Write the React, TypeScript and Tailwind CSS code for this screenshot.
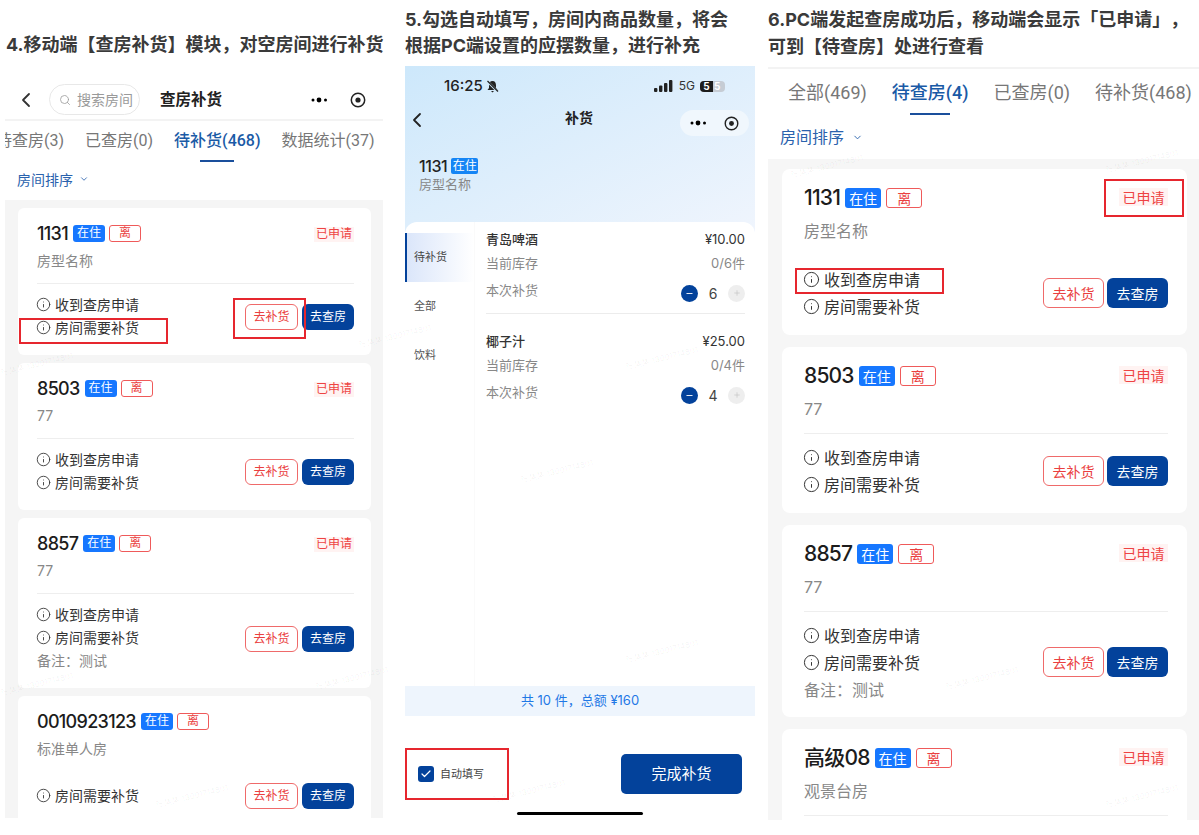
import { Info, ChevronLeft, ChevronDown, Search, Check, Minus, Plus } from "lucide-react";

const FONT = "font-['Inter','Noto_Sans_CJK_SC',sans-serif]";
const TAB_FONT = "font-['Roboto','Noto_Sans_CJK_SC',sans-serif]";

function Capsule() {
  return (
    <div className="flex items-center">
      <svg width="17" height="6" viewBox="0 0 17 6" className="text-black">
        <circle cx="2" cy="3" r="1.5" fill="currentColor" />
        <circle cx="8" cy="3" r="2.4" fill="currentColor" />
        <circle cx="14.5" cy="3" r="1.5" fill="currentColor" />
      </svg>
    </div>
  );
}

function Target({ size }: { size: number }) {
  return (
    <svg width={size} height={size} viewBox="0 0 16 16">
      <circle cx="8" cy="8" r="6.7" fill="none" stroke="#222" strokeWidth="1.5" />
      <circle cx="8" cy="8" r="2.6" fill="#222" />
    </svg>
  );
}

function Note({ text, big }: { text: string; big?: boolean }) {
  return (
    <div className={big ? "flex items-center h-[27px] gap-[4px] -ml-[1px] text-[16px] text-[#333]" : "flex items-center h-[23px] gap-[4px] -ml-[1px] text-[14px] text-[#333]"}>
      <Info size={big ? 17 : 15} strokeWidth={1.4} className="text-[#333]" />
      <span>{text}</span>
    </div>
  );
}

type CardProps = {
  no: string;
  type: string;
  notes: string[];
  remark?: boolean;
  applied?: boolean;
  divider?: boolean;
  big?: boolean;
  buttons?: boolean;
};

function Card({ no, type, notes, remark, applied = true, divider = true, big, buttons = true }: CardProps) {
  if (big) {
    return (
      <div className="bg-white rounded-[8px] pl-[22px] pr-[19px] pt-[18px] pb-[15px] shrink-0">
        <div className="flex items-center h-[22px]">
          <span className="text-[21px] font-medium text-[#1c1c1c] tracking-[-0.8px]">{no}</span>
          <span className="ml-[5px] w-[36px] h-[20px] flex items-center justify-center rounded-[3px] bg-[#1677ff] text-white text-[14px]">在住</span>
          <span className="ml-[5px] w-[36px] h-[20px] flex items-center justify-center rounded-[3px] border border-[#ef5a5a] text-[#ea4040] text-[14px]">离</span>
          {applied && (
            <span className="ml-auto mb-[2px] w-[49px] h-[18px] flex items-center justify-center bg-[#fff3f2] text-[#ee4343] text-[14px]">已申请</span>
          )}
        </div>
        <div className="mt-[10px] h-[24px] leading-[24px] text-[16px] text-[#888]">{type}</div>
        <div className={divider ? "mt-[12px] h-px bg-[#eeeeee]" : "mt-[12px] h-px bg-white"} />
        <div className="mt-[10px] flex items-center justify-between">
          <div className="flex flex-col">
            {notes.map((n) => (
              <Note key={n} text={n} big />
            ))}
            {remark && <div className="h-[26px] leading-[28px] text-[16px] text-[#888]">备注：测试</div>}
          </div>
          {buttons && (
            <div className="flex gap-[3px]">
              <span className="w-[61px] h-[30px] flex items-center justify-center rounded-[6px] border border-[#ef6a6a] text-[#ea4040] text-[14px]">去补货</span>
              <span className="w-[61px] h-[30px] flex items-center justify-center rounded-[6px] bg-[#03429b] text-white text-[14px]">去查房</span>
            </div>
          )}
        </div>
      </div>
    );
  }
  return (
    <div className="bg-white rounded-[6px] pl-[19px] pr-[17px] pt-[16px] pb-[16px] shrink-0">
      <div className="flex items-center h-[18px]">
        <span className="text-[18px] font-medium text-[#1c1c1c] tracking-[-0.7px]">{no}</span>
        <span className="ml-[5px] w-[32px] h-[17px] flex items-center justify-center rounded-[3px] bg-[#1677ff] text-white text-[12px]">在住</span>
        <span className="ml-[4px] w-[32px] h-[17px] flex items-center justify-center rounded-[3px] border border-[#ef5a5a] text-[#ea4040] text-[12px]">离</span>
        {applied && (
          <span className="ml-auto mt-[2px] w-[40px] h-[15px] flex items-center justify-center bg-[#fff3f2] text-[#ee4343] text-[12px]">已申请</span>
        )}
      </div>
      <div className="mt-[9px] h-[20px] leading-[20px] text-[14px] text-[#888]">{type}</div>
      <div className={divider ? "mt-[12px] h-px bg-[#eeeeee]" : "mt-[12px] h-px bg-white"} />
      <div className="mt-[9px] flex items-center justify-between">
        <div className="flex flex-col">
          {notes.map((n) => (
            <Note key={n} text={n} />
          ))}
          {remark && <div className="h-[23px] leading-[23px] text-[14px] text-[#888]">备注：测试</div>}
        </div>
        {buttons && (
          <div className="mt-[2px] flex gap-[4px]">
            <span className="w-[53px] h-[26px] flex items-center justify-center rounded-[6px] border border-[#ef6a6a] text-[#ea4040] text-[12px]">去补货</span>
            <span className="w-[52px] h-[26px] flex items-center justify-center rounded-[6px] bg-[#03429b] text-white text-[12px]">去查房</span>
          </div>
        )}
      </div>
    </div>
  );
}

const BOTH = ["收到查房申请", "房间需要补货"];

function ColumnOne() {
  return (
    <div className="w-[383px] pl-[5px] shrink-0">
      <h2 className="pt-[32px] h-[58px] leading-[26px] text-[18px] font-bold text-[#3a3a3a] pl-[1px] whitespace-nowrap">4.移动端【查房补货】模块，对空房间进行补货</h2>
      <div className="mt-[26px] h-[31px] flex items-center">
        <ChevronLeft size={24} strokeWidth={1.8} className="ml-[9px] text-[#333]" />
        <div className="ml-[11px] w-[91px] h-[31px] rounded-full border border-[#e8e8e8] flex items-center pl-[9px] gap-[6px] text-[14px] text-[#9a9a9a]">
          <Search size={12} strokeWidth={1.6} />
          <span>搜索房间</span>
        </div>
        <span className="ml-[20px] text-[15.5px] font-semibold text-[#222]">查房补货</span>
        <div className="ml-[89px]"><Capsule /></div>
        <div className="ml-[22px]"><Target size={16} /></div>
      </div>
      <div className="mt-[4px] h-[2px] bg-[#f3f3f3]" />
      <div className="mt-[8px] overflow-hidden">
        <div className={`${TAB_FONT} flex items-start gap-[21px] -ml-[9px] whitespace-nowrap text-[16px] text-[#777]`}>
          <span className="leading-[24px]">待查房(3)</span>
          <span className="leading-[24px]">已查房(0)</span>
          <div className="flex flex-col items-center">
            <span className="leading-[24px] font-medium text-[#1a5aa6]">待补货(468)</span>
            <div className="mt-[7px] w-[34px] h-[2px] bg-[#1a4f9c]" />
          </div>
          <span className="leading-[24px]">数据统计(37)</span>
        </div>
      </div>
      <div className="mt-[7px] h-[20px] flex items-center gap-[6px] pl-[12px] text-[14px] text-[#2a62ad]">
        <span>房间排序</span>
        <ChevronDown size={10} strokeWidth={2} />
      </div>
      <div className="mt-[11px] h-[618px] overflow-hidden bg-[#f5f5f5] pt-[8px] pl-[13px] pr-[12px] flex flex-col gap-[8px]">
        <Card no="1131" type="房型名称" notes={BOTH} />
        <Card no="8503" type="77" notes={BOTH} />
        <Card no="8857" type="77" notes={BOTH} remark />
        <Card no="0010923123" type="标准单人房" notes={["房间需要补货"]} applied={false} divider={false} />
      </div>
    </div>
  );
}

function Item({ name, price, stock, qty, divider }: { name: string; price: string; stock: string; qty: number; divider?: boolean }) {
  return (
    <div>
      <div className="flex justify-between h-[18px] leading-[18px] text-[13px] text-[#333]">
        <span className="font-medium">{name}</span>
        <span>{price}</span>
      </div>
      <div className="mt-[6px] flex justify-between h-[18px] leading-[18px] text-[13px] text-[#888]">
        <span>当前库存</span>
        <span>{stock}</span>
      </div>
      <div className="mt-[9px] flex justify-between h-[22px] text-[13px] text-[#888]">
        <span className="leading-[18px]">本次补货</span>
        <div className="mt-[3px] flex items-center h-[18px]">
          <span className="w-[17px] h-[17px] rounded-full bg-[#03429b] flex items-center justify-center">
            <Minus size={9} strokeWidth={2.4} className="text-white" />
          </span>
          <span className="w-[30px] text-center text-[14px] text-[#444]">{qty}</span>
          <span className="w-[17px] h-[17px] rounded-full bg-[#eeeeee] flex items-center justify-center">
            <Plus size={8} strokeWidth={2} className="text-[#c4c4c4]" />
          </span>
        </div>
      </div>
      <div className={divider ? "mt-[10px] mb-[18px] h-px bg-[#ececec]" : "mt-[10px] mb-[18px] h-px"} />
    </div>
  );
}

function ColumnTwo() {
  return (
    <div className="ml-[22px] w-[350px] shrink-0">
      <h2 className="pt-[7px] h-[66px] leading-[26px] text-[18px] font-bold text-[#3a3a3a] whitespace-nowrap">
        5.勾选自动填写，房间内商品数量，将会
        <br />
        根据PC端设置的应摆数量，进行补充
      </h2>
      <div className="h-[170px] bg-gradient-to-br from-[#cde8fb] to-[#f0f5fd] pt-[12px]">
        <div className="flex items-center h-[16px] pl-[39px]">
          <span className="text-[15px] font-medium text-[#222]">16:25</span>
          <svg width="13" height="13" viewBox="0 0 13 13" className="ml-[3px]">
            <path d="M6.5 1 C4 1 3 3 3 5.5 L3 8 L1.5 10 L11.5 10 L10 8 L10 5.5 C10 3 9 1 6.5 1 Z" fill="#222" />
            <path d="M5 11 L8 11 L6.5 12.6 Z" fill="#222" />
            <path d="M1.5 1.5 L11.5 11.5" stroke="#cde8fb" strokeWidth="2.4" />
            <path d="M1.5 1 L12 11.5" stroke="#222" strokeWidth="1.2" />
          </svg>
          <svg width="19" height="12" viewBox="0 0 19 12" className="ml-[155px]">
            <rect x="0" y="8" width="3.4" height="4" rx="1" fill="#222" />
            <rect x="5" y="5.5" width="3.4" height="6.5" rx="1" fill="#222" />
            <rect x="10" y="3" width="3.4" height="9" rx="1" fill="#222" />
            <rect x="15" y="0" width="3.4" height="12" rx="1" fill="#222" />
          </svg>
          <span className="ml-[6px] text-[12px] text-[#333]">5G</span>
          <span className="ml-[5px] w-[25px] h-[11px] rounded-[4px] bg-[#c6ccd4] flex overflow-hidden text-[10px] leading-[11px] font-bold">
            <span className="w-[13px] bg-[#1c1c1c] text-white text-center">5</span>
            <span className="text-white pl-[1px]">5</span>
          </span>
        </div>
        <div className="mt-[13px] flex items-start h-[28px]">
          <ChevronLeft size={24} strokeWidth={1.8} className="mt-[1px] text-[#222]" />
          <span className="ml-[136px] leading-[22px] text-[14px] font-semibold text-[#222]">补货</span>
          <div className="ml-auto mr-[6px] mt-[3px] w-[69px] h-[26px] rounded-full bg-[#f0f7fd] flex items-center pl-[10px] gap-[17px]">
            <Capsule />
            <Target size={15} />
          </div>
        </div>
        <div className="mt-[22px] pl-[14px] flex items-center h-[18px]">
          <span className="text-[16px] font-medium text-[#222] tracking-[-0.4px]">1131</span>
          <span className="ml-[4px] w-[27px] h-[16px] rounded-[2px] bg-[#1585f5] text-white text-[12px] flex items-center justify-center">在住</span>
        </div>
        <div className="pl-[14px] leading-[18px] text-[13px] text-[#888]">房型名称</div>
      </div>
      <div className="-mt-[14px] relative rounded-t-[12px] bg-white h-[464px] flex">
        <div className="w-[70px] pt-[11px] border-r border-[#fafafa] text-[11px] text-[#555]">
          <div className="h-[49px] flex items-center pl-[7px] border-l-2 border-[#03429b] bg-gradient-to-r from-[#dbe6fa] to-white text-[#444]">待补货</div>
          <div className="h-[49px] flex items-center pl-[9px]">全部</div>
          <div className="h-[49px] flex items-center pl-[9px]">饮料</div>
        </div>
        <div className="flex-1 pt-[8px] pl-[11px] pr-[10px]">
          <Item name="青岛啤酒" price="¥10.00" stock="0/6件" qty={6} divider />
          <Item name="椰子汁" price="¥25.00" stock="0/4件" qty={4} />
        </div>
      </div>
      <div className="h-[30px] bg-[#eef5fd] flex items-center justify-center text-[13px] text-[#1f78e6]">共 10 件，总额 ¥160</div>
      <div className="mt-[38px] flex items-center justify-between pl-[13px] pr-[13px]">
        <div className="flex items-center gap-[6px] text-[11px] text-[#444]">
          <span className="w-[16px] h-[16px] rounded-[3px] bg-[#03429b] flex items-center justify-center">
            <Check size={12} strokeWidth={2.4} className="text-white" />
          </span>
          <span>自动填写</span>
        </div>
        <div className="w-[121px] h-[40px] rounded-[5px] bg-[#03429b] flex items-center justify-center text-[15px] text-white">完成补货</div>
      </div>
      <div className="mt-[18px] mx-auto w-[126px] h-[3px] rounded-full bg-black" />
    </div>
  );
}

function ColumnThree() {
  return (
    <div className="ml-[13px] w-[431px] shrink-0 overflow-hidden">
      <h2 className="pt-[6px] h-[60px] leading-[27px] text-[18px] font-bold text-[#3a3a3a] whitespace-nowrap [text-spacing-trim:space-all]">
        6.PC端发起查房成功后，移动端会显示「已申请」，
        <br />
        可到【待查房】处进行查看
      </h2>
      <div className="mt-[7px] h-[2px] bg-[#f3f3f3]" />
      <div className={`${TAB_FONT} mt-[11px] pl-[20px] flex items-start gap-[25px] whitespace-nowrap text-[18px] text-[#777]`}>
        <span className="leading-[26px]">全部(469)</span>
        <div className="flex flex-col items-center">
          <span className="leading-[26px] font-medium text-[#1a5aa6]">待查房(4)</span>
          <div className="mt-[7px] w-[40px] h-[2px] bg-[#1a4f9c]" />
        </div>
        <span className="leading-[26px]">已查房(0)</span>
        <span className="leading-[26px]">待补货(468)</span>
      </div>
      <div className="mt-[11px] h-[22px] flex items-center gap-[8px] pl-[12px] text-[16px] text-[#2a62ad]">
        <span>房间排序</span>
        <ChevronDown size={11} strokeWidth={2} />
      </div>
      <div className="mt-[11px] h-[661px] overflow-hidden bg-[#f6f6f6] pt-[10px] pl-[14px] pr-[12px] flex flex-col gap-[12px]">
        <Card big no="1131" type="房型名称" notes={BOTH} divider={false} />
        <Card big no="8503" type="77" notes={BOTH} />
        <Card big no="8857" type="77" notes={BOTH} remark />
        <Card big no="高级08" type="观景台房" notes={[]} buttons={false} />
      </div>
    </div>
  );
}

const MARKS = [
  "left-[0px] top-[358px]", "left-[625px] top-[352px]", "left-[358px] top-[330px]", "left-[520px] top-[465px]",
  "left-[625px] top-[645px]", "left-[492px] top-[785px]", "left-[155px] top-[790px]", "left-[0px] top-[678px]",
  "left-[315px] top-[672px]", "left-[945px] top-[672px]", "left-[1105px] top-[790px]", "left-[790px] top-[160px]",
  "left-[1105px] top-[155px]",
];

export default function App() {
  return (
    <div className={`${FONT} relative w-[1199px] h-[835px] overflow-hidden bg-white flex`}>
      <ColumnOne />
      <ColumnTwo />
      <ColumnThree />
      {MARKS.map((m) => (
        <span key={m} className={`${m} absolute -rotate-[14deg] text-[8px] text-[#0000000d] whitespace-nowrap`}>张某某 13001714801</span>
      ))}
      <div className="absolute left-[19px] top-[318px] w-[149px] h-[26px] border-2 border-[#e6262e]" />
      <div className="absolute left-[233px] top-[298px] w-[73px] h-[41px] border-2 border-[#e6262e]" />
      <div className="absolute left-[405px] top-[748px] w-[104px] h-[52px] border-2 border-[#e6262e]" />
      <div className="absolute left-[1104px] top-[179px] w-[80px] h-[38px] border-2 border-[#e6262e]" />
      <div className="absolute left-[795px] top-[268px] w-[149px] h-[26px] border-2 border-[#e6262e]" />
    </div>
  );
}
